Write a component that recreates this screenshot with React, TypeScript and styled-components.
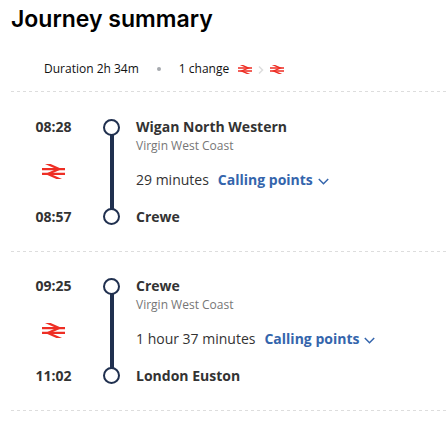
import React from "react";
import styled, { createGlobalStyle } from "styled-components";

const GlobalStyle = createGlobalStyle`
  * { box-sizing: border-box; }
  body {
    margin: 0;
    background: #fff;
    color: #333;
    font: 14px/20px "Open Sans", sans-serif;
  }
`;

const Page = styled.main`
  padding: 5px 0 0 11px;
`;

const Title = styled.h1`
  margin: 0;
  color: #000;
  font: 600 23px/28px Inter, sans-serif;
`;

const Divided = styled.div`
  background: repeating-linear-gradient(to right, #ddd 0 3px, transparent 3px 6px) left bottom / 100% 1px no-repeat;
`;

const Overview = styled(Divided)`
  display: flex;
  align-items: center;
  height: 59px;
  padding: 12px 0 0 33px;
  color: #111;
  font-size: 12px;
`;

const Dot = styled.span`
  width: 4px;
  height: 4px;
  margin: 0 18px;
  border-radius: 50%;
  background: #a6a9ae;
`;

const Operators = styled.span`
  display: flex;
  align-items: center;
  gap: 6px;
  margin: 2px 0 0 9px;
`;

const Journeys = styled.ol`
  margin: 0;
  padding: 0;
  list-style: none;
`;

const Leg = styled(Divided).attrs({ as: "li" })`
  display: grid;
  grid-template-columns: 37px 17px 1fr;
  column-gap: 31px;
  padding: 25px 0 25px 24px;

  & + & { padding-top: 24px; }
`;

const Times = styled.div`
  display: flex;
  flex-direction: column;
  align-items: center;
  justify-content: space-between;

  svg { margin-bottom: 2px; }
`;

const Time = styled.time`
  font-weight: 700;
`;

const Track = styled.div`
  display: flex;
  flex-direction: column;
  align-items: center;
  padding: 2px 0;
`;

const Stop = styled.span`
  flex: none;
  width: 17px;
  height: 17px;
  border: 2px solid #20304f;
  border-radius: 50%;
`;

const Line = styled.span`
  flex: 1;
  width: 4px;
  margin: -1px 0;
  background: #20304f;
`;

const LegBody = styled.div`
  display: flex;
  flex-direction: column;
  margin-left: -15px;
`;

const Station = styled.strong`
  font-weight: 700;
`;

const Operator = styled.span`
  color: #767676;
  font-size: 12px;
  line-height: 18px;
`;

const Details = styled.div`
  display: flex;
  gap: 9px;
  margin: 15px 0 17px;
`;

const CallingPoints = styled.button`
  display: flex;
  align-items: center;
  gap: 5px;
  padding: 0;
  border: 0;
  background: none;
  color: #3465ac;
  font: inherit;
  font-weight: 700;
  cursor: pointer;

  svg { margin-top: 2px; }
`;

const RailLogo = ({ width, height }: { width: number; height: number }) => (
  <svg width={width} height={height} viewBox="0 -2 62 43" preserveAspectRatio="none" role="img" aria-label="National Rail">
    <g stroke="#ee2e24" fill="none" strokeWidth="6.5">
      <path d="M1,-8.9 46,12.4 16,26.6 61,47.9" />
      <path d="M0,12.4H62M62,26.6H0" />
    </g>
  </svg>
);

const legs = [
  { departs: "08:28", arrives: "08:57", from: "Wigan North Western", to: "Crewe", duration: "29 minutes" },
  { departs: "09:25", arrives: "11:02", from: "Crewe", to: "London Euston", duration: "1 hour 37 minutes" },
];

export default function App() {
  return (
    <>
      <GlobalStyle />
      <Page>
        <Title>Journey summary</Title>
        <Overview>
          <span>Duration 2h 34m</span>
          <Dot />
          <span>1 change</span>
          <Operators>
            <RailLogo width={14} height={9} />
            <svg width="6" height="8" viewBox="0 0 6 8" fill="none" stroke="#ddd" strokeWidth="1.5">
              <path d="M1 .5 4.5 4 1 7.5" />
            </svg>
            <RailLogo width={14} height={9} />
          </Operators>
        </Overview>
        <Journeys>
          {legs.map((leg) => (
            <Leg key={leg.departs}>
              <Times>
                <Time>{leg.departs}</Time>
                <RailLogo width={23} height={15} />
                <Time>{leg.arrives}</Time>
              </Times>
              <Track>
                <Stop />
                <Line />
                <Stop />
              </Track>
              <LegBody>
                <Station>{leg.from}</Station>
                <Operator>Virgin West Coast</Operator>
                <Details>
                  <span>{leg.duration}</span>
                  <CallingPoints type="button">
                    Calling points
                    <svg width="11" height="7" viewBox="0 0 11 7" fill="none" stroke="currentColor" strokeWidth="1.5">
                      <path d="M.8 1 5.5 5.7 10.2 1" />
                    </svg>
                  </CallingPoints>
                </Details>
                <Station>{leg.to}</Station>
              </LegBody>
            </Leg>
          ))}
        </Journeys>
      </Page>
    </>
  );
}
